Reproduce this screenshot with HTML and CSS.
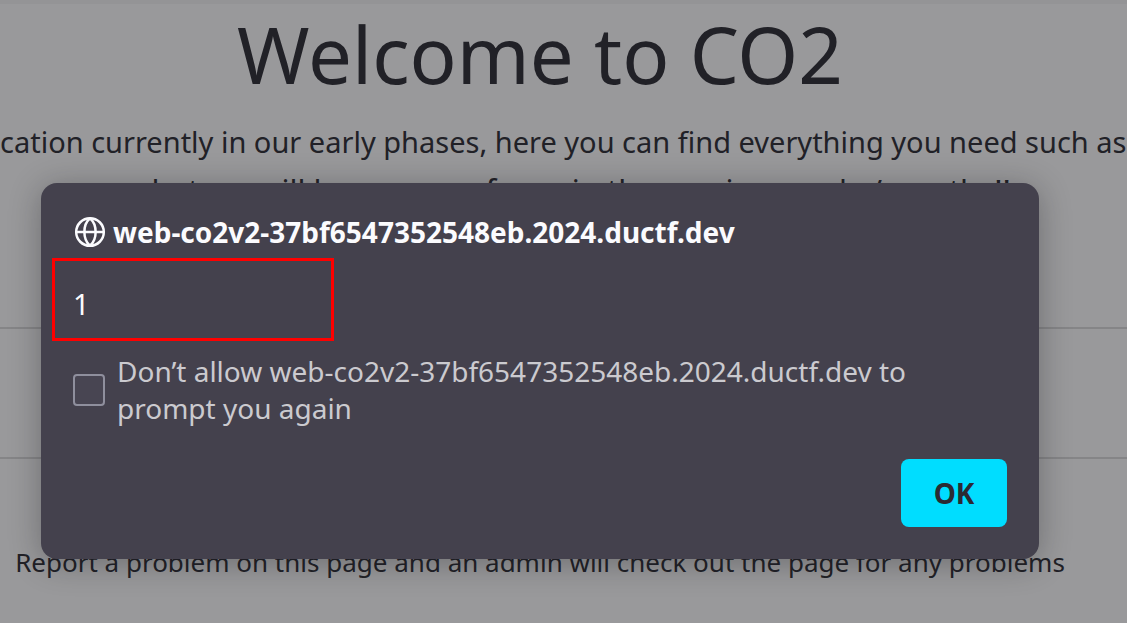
FILE: index.html
```html
<!DOCTYPE html>
<html lang="en">
<head>
<meta charset="utf-8">
<title>Welcome to CO2</title>
<link rel="stylesheet" href="styles.css">
</head>
<body>
<main class="page">
  <header class="hero">
    <h1 class="title">Welcome to CO2</h1>
    <p class="intro">cation currently in our early phases, here you can find everything you need such as</p>
    <p class="intro intro-last">see what we will be our new focus in the coming weeks/months!!</p>
  </header>
  <section class="band"></section>
  <section class="report">
    <p class="report-text">Report a problem on this page and an admin will check out the page for any problems</p>
  </section>
</main>
<div class="overlay">
  <section class="dialog" role="dialog" aria-labelledby="origin">
    <header class="dialog-head">
      <svg class="globe" viewBox="0 0 32 32" fill="none" stroke="currentColor" stroke-width="2.5" aria-hidden="true">
        <circle cx="16" cy="16" r="13.8"/>
        <path d="M2.2 16h27.6M16 2.2c-7.500 6.500-7.500 21.100 0 27.600M16 2.200c7.500 6.500 7.500 21.100 0 27.600"/>
      </svg>
      <h2 class="origin" id="origin">web-co2v2-37bf6547352548eb.2024.ductf.dev</h2>
    </header>
    <div class="message">1<span class="highlight"></span></div>
    <div class="option">
      <input class="check" type="checkbox" id="block">
      <label for="block">Don’t allow web-co2v2-37bf6547352548eb.2024.ductf.dev to prompt you again</label>
    </div>
    <footer class="actions"><button class="ok" type="button">OK</button></footer>
  </section>
</div>
</body>
</html>
```
FILE: styles.css
```css
* { box-sizing: border-box; }
body {
  margin: 0;
  min-height: 100vh;
  background: #99999b;
  color: #212127;
  font-family: "Noto Sans", "Open Sans", sans-serif;
  overflow: hidden;
}
h1, h2, p { margin: 0; font-weight: 400; }
.page { border-top: 4px solid #949496; }
.hero { padding-top: 2px; height: 323px; }
.title {
  padding-right: 47px;
  font-size: 78px;
  line-height: 96px;
  text-align: center;
}
.intro {
  margin-top: 16px;
  font-size: 29px;
  line-height: 48px;
  white-space: nowrap;
}
.intro-last { margin-top: 0; padding-right: 47px; font-size: 31px; text-align: center; }
.band {
  height: 132px;
  border-top: 2px solid #858587;
  border-bottom: 2px solid #858587;
}
.report { padding: 83px 47px 0 0; }
.report-text {
  font-size: 26px;
  line-height: 40px;
  text-align: center;
  white-space: nowrap;
}
.overlay {
  position: absolute;
  inset: 0;
  padding: 183px 88px 0 41px;
}
.dialog {
  padding: 31px 32px 32px;
  border-radius: 16px;
  background: #44414d;
  color: #fbfbfe;
  box-shadow: 0 4px 32px rgba(20, 20, 22, 0.32);
  font-size: 29px;
  line-height: 37px;
}
.dialog-head { display: flex; align-items: center; gap: 7px; height: 36px; padding-left: 1px; }
.globe { width: 32px; height: 32px; }
.origin { font-size: 28px; line-height: 36px; font-weight: 700; }
.message { position: relative; margin-top: 35px; }
.highlight {
  position: absolute;
  left: -21px;
  top: -27px;
  width: 282px;
  height: 83px;
  border: 3px solid #ff0000;
}
.option {
  display: flex;
  align-items: center;
  gap: 12px;
  margin-top: 31px;
  color: #cbcacf;
  font-size: 28px;
}
.check {
  appearance: none;
  flex: none;
  width: 32px;
  height: 32px;
  margin: 0;
  border: 2px solid #8f8f9d;
  border-radius: 4px;
  background: #484552;
}
.option label { max-width: 830px; }
.actions { display: flex; justify-content: flex-end; margin-top: 32px; }
.ok {
  min-width: 106px;
  height: 68px;
  border: 0;
  border-radius: 8px;
  background: #00ddff;
  color: #2b2a33;
  font: 700 28px "Noto Sans", "Open Sans", sans-serif;
}
```
